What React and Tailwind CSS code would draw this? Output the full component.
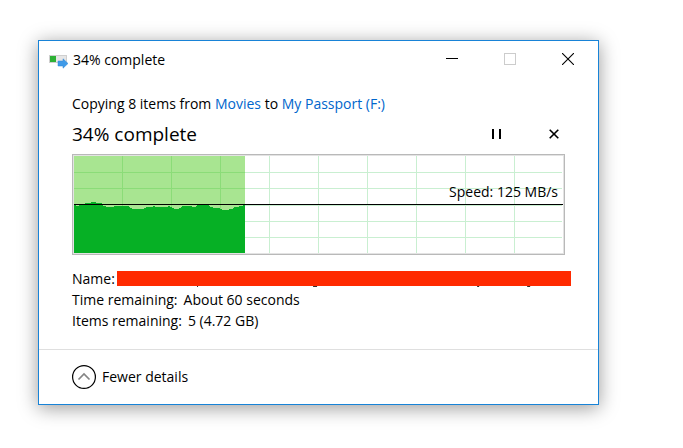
import React, { useState } from 'react';

const COLUMNS = [48, 97, 146, 195, 244, 293, 342, 391, 440];
const ROWS = [16, 32, 49, 65, 81];

// [start x, top y] of every step in the transfer speed history
const SPEED_STEPS = [
  [0, 49], [2, 50], [5, 49], [11, 47], [17, 46], [22, 47], [28, 48], [29, 50],
  [32, 51], [40, 50], [55, 51], [56, 52], [58, 53], [70, 52], [72, 51], [79, 50],
  [81, 51], [94, 50], [96, 51], [98, 52], [100, 53], [105, 52], [107, 51],
  [108, 50], [118, 51], [122, 50], [123, 49], [135, 50], [136, 51], [139, 52],
  [146, 53], [148, 54], [155, 53], [159, 52], [160, 51], [165, 50], [169, 49],
];
const PROGRESS_END = 171;

const speedPath =
  'M0 97' + SPEED_STEPS.map(([x, y]) => `H${x}V${y}`).join('') + `H${PROGRESS_END}V97Z`;

function CopyIcon() {
  return (
    <svg width="20" height="18" viewBox="0 0 20 18" className="shrink-0" aria-hidden="true">
      <rect x="0.5" y="4.5" width="17" height="7" fill="#e6e6e6" stroke="#cfcfcf" />
      <rect x="1" y="5" width="6" height="6" fill="#2eb135" />
      <path d="M9 10h5V7.800l5 4.700-5 4.700V15H9z" fill="#3f9ae8" stroke="#2f86d6" strokeWidth="0.5" />
    </svg>
  );
}

function TitleBar({ title }) {
  return (
    <header className="flex h-9 items-center justify-between pl-[10px] pr-px">
      <div className="flex items-center gap-1 pt-px">
        <CopyIcon />
        <h1 className="text-sm">{title}</h1>
      </div>
      <div className="flex h-full">
        <button aria-label="Minimize" className="flex w-[58px] items-center justify-center">
          <svg width="12" height="12" viewBox="0 0 12 12" shapeRendering="crispEdges">
            <rect y="5" width="12" height="1" fill="#000" />
          </svg>
        </button>
        <button aria-label="Maximize" disabled className="flex w-[58px] items-center justify-center">
          <svg width="12" height="12" viewBox="0 0 12 12">
            <rect x="0.5" y="0.5" width="11" height="11" fill="none" stroke="#ccc" />
          </svg>
        </button>
        <button aria-label="Close" className="flex w-[58px] items-center justify-center">
          <svg width="12" height="12" viewBox="0 0 12 12">
            <path d="M0 0l12 12M12 0L0 12" stroke="#000" strokeWidth="1.1" />
          </svg>
        </button>
      </div>
    </header>
  );
}

function SpeedChart() {
  return (
    <div className="relative border border-[#b9b9b9]">
      <div className="border border-[#e3e3e3]">
        <svg
          viewBox="0 0 489 97"
          preserveAspectRatio="none"
          shapeRendering="crispEdges"
          className="block h-[97px] w-full"
          aria-hidden="true"
        >
          {COLUMNS.map((x) => (
            <rect key={x} x={x} width="1" height="97" fill="#c9efd1" />
          ))}
          {ROWS.map((y) => (
            <rect key={y} y={y} width="488" height="1" fill="#c9efd1" />
          ))}
          <rect width={PROGRESS_END} height="97" fill="#a8e591" />
          {COLUMNS.filter((x) => x < PROGRESS_END).map((x) => (
            <rect key={x} x={x} width="1" height="97" fill="#8bdc78" />
          ))}
          {ROWS.slice(0, 2).map((y) => (
            <rect key={y} y={y} width={PROGRESS_END} height="1" fill="#8bdc78" />
          ))}
          <path d={speedPath} fill="#06b025" />
          <rect y="48" width="489" height="1" fill="#000" />
        </svg>
      </div>
      <span className="absolute right-[6px] top-[27px] text-sm leading-5">Speed: 125 MB/s</span>
    </div>
  );
}

function Details() {
  return (
    <dl className="mt-[13px] text-sm leading-[21px]">
      <div className="flex items-center gap-[2px]">
        <dt>Name:</dt>
        <dd className="relative -mr-[6px] h-[15px] flex-1 bg-[#ff2a00]">
          <svg
            viewBox="0 0 454 1"
            preserveAspectRatio="none"
            className="absolute left-0 top-full h-px w-full"
            aria-hidden="true"
          >
            <path d="M80 0h1v1h-1zM196 0h4v1h-4zM360 0h2v1h-2zM410 0h3v1h-3z" fill="#333" />
          </svg>
        </dd>
      </div>
      <div className="flex gap-[6px]">
        <dt>Time remaining:</dt>
        <dd>About 60 seconds</dd>
      </div>
      <div className="flex gap-[6px]">
        <dt>Items remaining:</dt>
        <dd>5 (4.72 GB)</dd>
      </div>
    </dl>
  );
}

export default function App() {
  const [expanded, setExpanded] = useState(true);

  return (
    <div className="bg-white pb-10 pl-[38px] pr-[84px] pt-10 font-['Open_Sans',sans-serif] text-black">
      <section className="border border-[#1883d7] bg-white shadow-[0_3px_18px_rgba(0,0,0,0.4)]">
        <TitleBar title="34% complete" />

        <main className="px-[33px] pb-[18px] pt-[17px]">
          <p className="text-sm leading-5">
            Copying 8 items from <a href="#movies" className="text-[#0066cc]">Movies</a> to{' '}
            <a href="#passport" className="text-[#0066cc]">My Passport (F:)</a>
          </p>
          <div className="flex h-10 items-center justify-between">
            <h2 className="text-[19px] leading-7">34% complete</h2>
            <div className="flex gap-9">
              <button aria-label="Pause" className="flex h-6 w-[22px] items-center justify-center">
                <svg width="10" height="10" viewBox="0 0 10 10" shapeRendering="crispEdges">
                  <path d="M1 0h2v10H1zM8 0h2v10H8z" fill="#000" />
                </svg>
              </button>
              <button aria-label="Cancel" className="flex h-6 w-[22px] items-center justify-center">
                <svg width="10" height="10" viewBox="0 0 10 10">
                  <path d="M0.700 0.700l8.600 8.600M9.300 0.700L0.700 9.300" stroke="#000" strokeWidth="1.6" />
                </svg>
              </button>
            </div>
          </div>
          <SpeedChart />
          {expanded && <Details />}
        </main>

        <footer className="flex h-[55px] items-center border-t border-[#dfdfdf] px-[33px]">
          <button onClick={() => setExpanded(!expanded)} className="flex items-center gap-[6px] text-sm">
            <svg width="24" height="24" viewBox="0 0 24 24" fill="none">
              <circle cx="12" cy="12" r="11.4" stroke="#000" strokeWidth="1.2" />
              <path d="M6.500 14.500L12 9l5.500 5.500" stroke="#858585" strokeWidth="1.7" />
            </svg>
            {expanded ? 'Fewer details' : 'More details'}
          </button>
        </footer>
      </section>
    </div>
  );
}
